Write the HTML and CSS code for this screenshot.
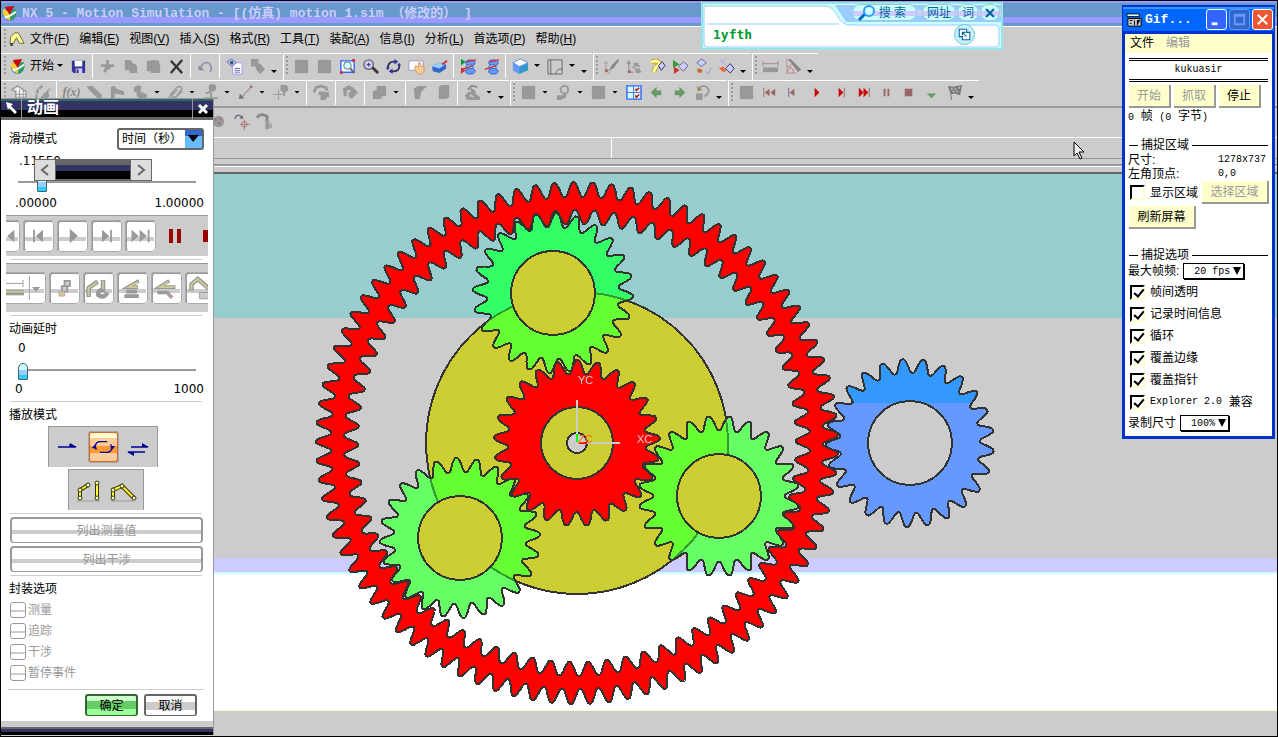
FILE: index.html
```html
<!DOCTYPE html>
<html lang="zh-CN">
<head>
    <meta charset="UTF-8">
    <meta name="viewport" content="width=device-width, initial-scale=1.0">
    <title>NX 5 - Motion Simulation</title>
    <link rel="stylesheet" href="styles.css">
</head>
<body>
    <svg class="symbols" aria-hidden="true">
        <symbol id="nx" viewBox="0 0 18 18"><circle cx="9" cy="10" r="7" fill="#39c"/><path d="M3 4Q0 9 5 14L10 17 9 8Z" fill="#fc3"/><path d="M9 8L15 4Q19 10 13 15L10 17Z" fill="#396"/><path d="M4 13Q10 12 16 7" stroke="#fff" stroke-width="2" fill="none"/><path d="M4 2L14 1 9 10Z" fill="#c00"/></symbol>
        <symbol id="save" viewBox="0 0 18 18"><path d="M2 3H16V16H4L2 14Z" fill="#339"/><path d="M5 3H13V9H5Z" fill="#fff"/><path d="M6 11H13V16H6Z" fill="#ccf"/><path d="M7 12H9V16H7Z" fill="#336"/></symbol>
        <symbol id="cut" viewBox="0 0 18 18"><path d="M9 2V7M2 8H16M9 7L6 15M12 8L9 12" stroke="#999" stroke-width="3" fill="none"/></symbol>
        <symbol id="copy" viewBox="0 0 18 18"><path d="M3 2H9L12 6H14L16 9V16H8V13H3Z" fill="#999"/></symbol>
        <symbol id="paste" viewBox="0 0 18 18"><path d="M2 3H6V2H12V3H15V6H16V16H6V14H2Z" fill="#999"/></symbol>
        <symbol id="del" viewBox="0 0 18 18"><path d="M3 3L15 16M15 2L3 16" stroke="#333" stroke-width="2.4" fill="none"/></symbol>
        <symbol id="undo" viewBox="0 0 18 18"><path d="M4 12Q5 4 11 5Q17 7 14 15" stroke="#99a" stroke-width="2" fill="none"/><path d="M1 8L8 13H2Z" fill="#889"/></symbol>
        <symbol id="find" viewBox="0 0 18 18"><path d="M7 5H17V17H7Z" fill="#fff" stroke="#99f"/><path d="M9 11H15M9 13H15M9 15H15" stroke="#669"/><path d="M1 4L6 1 11 5 6 9Z" fill="#ccf" stroke="#66c"/><circle cx="6" cy="5" r="2" fill="#366"/></symbol>
        <symbol id="shapes" viewBox="0 0 18 18"><path d="M2 1H10V6H12L17 12 12 17 7 12V9H2Z" fill="#999"/></symbol>
        <symbol id="square" viewBox="0 0 18 18"><path d="M2 2H16V16H2Z" fill="#999"/></symbol>
        <symbol id="fit" viewBox="0 0 18 18"><path d="M2 3H16V15H2Z" fill="#fff" stroke="#36f" stroke-width="1.5"/><circle cx="9" cy="8" r="4" fill="#cff" stroke="#666"/><path d="M12 11L16 16" stroke="#666" stroke-width="2"/><path d="M1 14H4V17H1ZM14 1H17V4H14Z" fill="#c33"/></symbol>
        <symbol id="zoomer" viewBox="0 0 18 18"><circle cx="7" cy="7" r="5" fill="#cce" stroke="#667" stroke-width="1.5"/><path d="M5 7H9M7 5V9" stroke="#339"/><path d="M11 10L17 16" stroke="#433" stroke-width="3"/></symbol>
        <symbol id="rotate" viewBox="0 0 18 18"><path d="M3 11Q3 3 11 4M15 7Q16 15 7 14" stroke="#336" stroke-width="2" fill="none"/><path d="M10 1L14 4 10 7ZM8 11L4 14 8 17ZM1 10H5L3 13ZM13 8H17L15 5Z" fill="#339"/></symbol>
        <symbol id="pan" viewBox="0 0 18 18"><path d="M1 3H16V13H1Z" fill="#fff" stroke="#99c"/><path d="M8 8L11 10 11 5H13L14 9H17V14L14 17H11L7 12Z" fill="#fc9" stroke="#c96"/></symbol>
        <symbol id="part" viewBox="0 0 18 18"><path d="M1 9L8 5 16 7V11L9 16 2 14Z" fill="#36c"/><path d="M1 9L8 5 15 7 9 11Z" fill="#9cf"/><path d="M12 7L17 3" stroke="#c33" stroke-width="2"/></symbol>
        <symbol id="sim" viewBox="0 0 18 18"><ellipse cx="11" cy="5" rx="5" ry="3" fill="#69f" stroke="#36c"/><ellipse cx="10" cy="10" rx="4" ry="3" fill="#9cf" stroke="#36c"/><ellipse cx="11" cy="14" rx="5" ry="3" fill="#69f" stroke="#36c"/><path d="M7 4L17 2M2 12L14 8" stroke="#c33" stroke-width="1.5"/></symbol>
        <symbol id="solve" viewBox="0 0 18 18"><use href="#sim"/><path d="M1 1L6 4 1 8Z" fill="#093"/><path d="M1 10L6 13 1 17Z" fill="#c33"/></symbol>
        <symbol id="cube" viewBox="0 0 18 18"><path d="M1 5L9 1 17 5V13L8 17 1 13Z" fill="#39c"/><path d="M1 5L9 1 17 5 8 9Z" fill="#fff" stroke="#69c"/><path d="M1 5L8 9V17L1 13Z" fill="#69f"/></symbol>
        <symbol id="sheet" viewBox="0 0 18 18"><path d="M1 2H16V17H1ZM4 2V17M9 17Q11 10 16 12" fill="none" stroke="#666"/></symbol>
        <symbol id="axis" viewBox="0 0 18 18"><path d="M3 4V13H9M3 13L8 17M3 4L1 6M3 4L5 6" stroke="#999" fill="none"/><path d="M6 13L10 7 16 1 17 3 11 11Z" fill="#888"/><path d="M2 12H5V15H2Z" fill="#a66"/></symbol>
        <symbol id="axis2" viewBox="0 0 18 18"><path d="M3 2V15H8M3 4L1 6M3 4L5 6M8 6L15 9M6 9L16 15" stroke="#999" stroke-width="1.5" fill="none"/><path d="M8 5H13V9H8ZM10 11H15V16H10Z" fill="#999"/><path d="M2 13H5V16H2Z" fill="#a66"/></symbol>
        <symbol id="chain" viewBox="0 0 18 18"><path d="M2 4L8 3 12 6 7 10 5 15" stroke="#c93" stroke-width="5" fill="none"/><path d="M2 4L8 3 12 6 7 10 5 15" stroke="#ff9" stroke-width="3" fill="none"/><path d="M10 8L14 4 17 8 13 13Z" fill="#ccf" stroke="#336"/></symbol>
        <symbol id="run" viewBox="0 0 18 18"><path d="M1 2L8 7 1 10Z" fill="#393"/><path d="M2 9L8 13 2 17Z" fill="#c33"/><path d="M7 9L12 4 17 8 12 14Z" fill="#ccf" stroke="#669"/></symbol>
        <symbol id="link" viewBox="0 0 18 18"><path d="M2 5L7 1 12 5 7 9Z" fill="#ccf" stroke="#669"/><path d="M11 14L14 17 17 10" stroke="#99c" fill="none"/><path d="M2 12L5 11 8 13 7 16 3 15Z" fill="#c63"/></symbol>
        <symbol id="link2" viewBox="0 0 18 18"><path d="M8 11L13 6 17 11 13 16Z" fill="#ccf" stroke="#336"/><path d="M2 2L9 8M7 1L4 6" stroke="#99f" stroke-dasharray="2 1"/><path d="M1 11L5 9 9 13 6 15Z" fill="#e63"/></symbol>
        <symbol id="measure" viewBox="0 0 18 18"><path d="M1 10H17V15H1Z" fill="#999"/><path d="M1 3V9M17 3V9M1 6H17" stroke="#a88" fill="none"/></symbol>
        <symbol id="angle" viewBox="0 0 18 18"><path d="M2 1V16H12M2 9Q9 9 9 16M2 16L7 6" stroke="#b88" fill="none"/><path d="M3 1H6L17 12 14 15Z" fill="#888"/></symbol>
        <symbol id="grid" viewBox="0 0 18 18"><path d="M1 6L7 2 16 8V16H5V8Z" fill="#eee" stroke="#999" stroke-width="1.5"/><path d="M5 11H16M5 14H16M9 6V16M13 6V16" stroke="#999"/></symbol>
        <symbol id="arm" viewBox="0 0 18 18"><path d="M2 16L4 6 9 2M8 15L12 11 17 5" stroke="#999" stroke-width="2.5" stroke-dasharray="5 1" fill="none"/><circle cx="13" cy="12" r="3" fill="#999"/></symbol>
        <symbol id="bar" viewBox="0 0 18 18"><path d="M1 2H7L17 12V16H13L2 5Z" fill="#999"/></symbol>
        <symbol id="slide" viewBox="0 0 18 18"><path d="M2 3L6 2 8 5 16 8V12L6 10V16H2Z" fill="#999"/></symbol>
        <symbol id="blob" viewBox="0 0 18 18"><path d="M2 4Q6 -1 10 3L9 8 16 11V14L11 17 5 13V9L2 8Z" fill="#999"/></symbol>
        <symbol id="clip" viewBox="0 0 18 18"><path d="M3 12L10 4Q15 1 16 5L10 13Q6 16 5 12L11 6M2 15L6 9M8 15L16 8" stroke="#999" stroke-width="1.5" fill="none"/></symbol>
        <symbol id="pin" viewBox="0 0 18 18"><path d="M10 5L9 8 4 10M9 8L10 15M2 15H17" stroke="#999" stroke-width="2" fill="none"/><circle cx="11" cy="4" r="4" fill="#999"/></symbol>
        <symbol id="arrow" viewBox="0 0 18 18"><path d="M15 3L5 14" stroke="#777"/><path d="M2 16L3 10 8 15Z" fill="#777"/><circle cx="15" cy="3" r="1.5" fill="#a66"/></symbol>
        <symbol id="mark" viewBox="0 0 18 18"><path d="M1 11H13M7 6V17" stroke="#999"/><path d="M9 1H15L17 3V7L14 9V13H12V9L9 7Z" fill="#999"/></symbol>
        <symbol id="hook" viewBox="0 0 18 18"><path d="M1 9L3 4 8 2 14 4 15 7" stroke="#999" stroke-width="3" fill="none"/><path d="M6 8H10L17 9V14H14V17H8V12H6Z" fill="#999"/></symbol>
        <symbol id="roll" viewBox="0 0 18 18"><path d="M1 5L7 1 12 4 17 9 10 16 7 13H2Z" fill="#999"/><path d="M6 13V8L9 7" stroke="#ccc" stroke-width="2" fill="none"/></symbol>
        <symbol id="union" viewBox="0 0 18 18"><path d="M6 2H16V13H11V16H2V7H6Z" fill="#999"/></symbol>
        <symbol id="slab" viewBox="0 0 18 18"><path d="M2 5L6 2H16L10 8 8 16H3Z" fill="#999"/></symbol>
        <symbol id="plate" viewBox="0 0 18 18"><path d="M4 3L7 1H15V14L12 16H4Z" fill="#999"/></symbol>
        <symbol id="joint" viewBox="0 0 18 18"><path d="M4 6L8 2 14 3M7 5L12 9" stroke="#888" stroke-width="2" fill="none"/><path d="M1 12L5 8H10L17 14V17H3Z" fill="#999"/><path d="M5 13L8 11 11 14Z" fill="#ccc"/></symbol>
        <symbol id="lamp" viewBox="0 0 18 18"><circle cx="10" cy="6" r="4" fill="none" stroke="#999" stroke-width="2"/><path d="M2 12H8L12 9V14L6 17H2Z" fill="#999"/></symbol>
        <symbol id="checks" viewBox="0 0 18 18"><path d="M2 2H17V16H2Z" fill="#cff" stroke="#36f" stroke-width="1.5"/><path d="M9 2V16M2 9H17" stroke="#66c"/><path d="M11 5L12 7 15 4M11 12L12 14 15 11" stroke="#c00" stroke-width="1.5" fill="none"/></symbol>
        <symbol id="left" viewBox="0 0 18 18"><path d="M3 9L9 3V7H14V12H9V15Z" fill="#696"/></symbol>
        <symbol id="right" viewBox="0 0 18 18"><path d="M15 9L9 3V7H4V12H9V15Z" fill="#696"/></symbol>
        <symbol id="turn" viewBox="0 0 18 18"><path d="M5 5Q10 -1 15 5Q17 10 11 13" stroke="#999" stroke-width="2" fill="none"/><path d="M2 10H9V17H2Z" fill="#999"/><path d="M3 2L4 8 9 6Z" fill="#986"/></symbol>
        <symbol id="first" viewBox="0 0 18 18"><path d="M9 5V13L4 9ZM15 5V13L10 9Z" fill="#966"/><path d="M3 4V14" stroke="#966"/></symbol>
        <symbol id="prev" viewBox="0 0 18 18"><path d="M11 5V13L6 9Z" fill="#966"/><path d="M5 4V14" stroke="#669"/></symbol>
        <symbol id="play" viewBox="0 0 18 18"><path d="M6 4V14L11 9Z" fill="#c00"/></symbol>
        <symbol id="next" viewBox="0 0 18 18"><path d="M6 4V14L11 9Z" fill="#c00"/><path d="M12 4V14" stroke="#966"/></symbol>
        <symbol id="last" viewBox="0 0 18 18"><path d="M3 4V14L8 9ZM8 4V14L13 9Z" fill="#c00"/><path d="M14 4V14" stroke="#966"/></symbol>
        <symbol id="pause" viewBox="0 0 18 18"><path d="M6 5H8V13H6ZM10 5H12V13H10Z" fill="#966"/></symbol>
        <symbol id="stop" viewBox="0 0 18 18"><path d="M5 5H13V13H5Z" fill="#966"/></symbol>
        <symbol id="down" viewBox="0 0 18 18"><path d="M4 10H14L9 15Z" fill="#696"/></symbol>
        <symbol id="flag" viewBox="0 0 18 18"><path d="M2 2L7 3 17 1 15 12 9 10 5 11Z" fill="#777"/><path d="M5 11L6 17" stroke="#777"/><path d="M5 4H7V6H5ZM9 4H11V6H9ZM13 3H15V5H13ZM7 7H9V9H7ZM11 7H13V9H11Z" fill="#bbb"/></symbol>
        <symbol id="ball" viewBox="0 0 18 18"><circle cx="9" cy="9" r="6" fill="#999"/><path d="M5 7H7M9 11H11M10 6H12" stroke="#a66" stroke-width="2"/></symbol>
        <symbol id="point" viewBox="0 0 18 18"><path d="M2 6Q4 0 9 4" stroke="#667" stroke-width="1.5" fill="none"/><path d="M7 6L11 6 10 2Z" fill="#667"/><circle cx="12" cy="12" r="3" fill="none" stroke="#a77"/><path d="M12 7V18M7 12H18" stroke="#a77"/></symbol>
        <symbol id="node" viewBox="0 0 18 18"><path d="M1 5Q5 -1 12 4L11 9" stroke="#888" stroke-width="3" fill="none"/><path d="M10 8H14V17H10Z" fill="#999"/><path d="M14 11H17V16H14Z" fill="#aaa"/></symbol>
    </svg>

    <div class="app">
        <header class="titlebar">
            <svg class="logo"><use href="#nx"/></svg>
            <h1>NX 5 - Motion Simulation - [(仿真) motion_1.sim （修改的） ]</h1>
        </header>

        <nav class="menubar">
            <span class="grip"></span>
            <svg class="part-icon" viewBox="0 0 18 18"><path d="M2 13L3 6 7 2H11L17 13H12L9 7 6 13Z" fill="#ff9" stroke="#663"/><path d="M2 13H5V16H3Z" fill="#333"/></svg>
            <a href="#">文件(<u>F</u>)</a>
            <a href="#">编辑(<u>E</u>)</a>
            <a href="#">视图(<u>V</u>)</a>
            <a href="#">插入(<u>S</u>)</a>
            <a href="#">格式(<u>R</u>)</a>
            <a href="#">工具(<u>T</u>)</a>
            <a href="#">装配(<u>A</u>)</a>
            <a href="#">信息(<u>I</u>)</a>
            <a href="#">分析(<u>L</u>)</a>
            <a href="#">首选项(<u>P</u>)</a>
            <a href="#">帮助(<u>H</u>)</a>
        </nav>

        <div class="toolbar">
            <div class="group">
                <span class="grip"></span>
                <button class="tool start"><svg><use href="#nx"/></svg>开始</button><i class="drop"></i>
                <button class="tool" aria-label="保存"><svg><use href="#save"/></svg></button>
                <span class="sep"></span>
                <button class="tool" aria-label="剪切"><svg><use href="#cut"/></svg></button>
                <button class="tool" aria-label="复制"><svg><use href="#copy"/></svg></button>
                <button class="tool" aria-label="粘贴"><svg><use href="#paste"/></svg></button>
                <button class="tool" aria-label="删除"><svg><use href="#del"/></svg></button>
                <span class="sep"></span>
                <button class="tool" aria-label="撤消"><svg><use href="#undo"/></svg></button>
                <span class="sep"></span>
                <button class="tool" aria-label="查找"><svg><use href="#find"/></svg></button>
                <button class="tool" aria-label="形状"><svg><use href="#shapes"/></svg></button><i class="drop low"></i>
            </div>
            <div class="group">
                <span class="grip"></span>
                <button class="tool" aria-label="视图一"><svg><use href="#square"/></svg></button>
                <button class="tool" aria-label="视图二"><svg><use href="#square"/></svg></button>
                <button class="tool" aria-label="适合窗口"><svg><use href="#fit"/></svg></button>
                <button class="tool" aria-label="缩放"><svg><use href="#zoomer"/></svg></button>
                <button class="tool" aria-label="旋转"><svg><use href="#rotate"/></svg></button>
                <button class="tool" aria-label="平移"><svg><use href="#pan"/></svg></button>
                <button class="tool" aria-label="透视"><svg><use href="#part"/></svg></button>
                <span class="sep"></span>
                <button class="tool" aria-label="求解"><svg><use href="#solve"/></svg></button>
                <button class="tool" aria-label="仿真"><svg><use href="#sim"/></svg></button>
                <span class="sep"></span>
                <button class="tool" aria-label="着色"><svg><use href="#cube"/></svg></button><i class="drop"></i>
                <button class="tool" aria-label="图纸"><svg><use href="#sheet"/></svg></button><i class="drop"></i><i class="drop low"></i>
            </div>
            <div class="group">
                <span class="grip"></span>
                <button class="tool" aria-label="坐标系"><svg><use href="#axis"/></svg></button>
                <button class="tool" aria-label="坐标轴"><svg><use href="#axis2"/></svg></button>
                <button class="tool" aria-label="连杆"><svg><use href="#chain"/></svg></button>
                <button class="tool" aria-label="运行"><svg><use href="#run"/></svg></button>
                <button class="tool" aria-label="连接"><svg><use href="#link"/></svg></button>
                <button class="tool" aria-label="断开"><svg><use href="#link2"/></svg></button><i class="drop low"></i>
            </div>
            <div class="group">
                <span class="grip"></span>
                <button class="tool" aria-label="测量距离"><svg><use href="#measure"/></svg></button>
                <button class="tool" aria-label="测量角度"><svg><use href="#angle"/></svg></button><i class="drop low"></i>
            </div>
        </div>

        <div class="toolbar second">
            <div class="group">
                <span class="grip"></span>
                <button class="tool" aria-label="环境"><svg><use href="#grid"/></svg></button>
                <button class="tool" aria-label="机构"><svg><use href="#arm"/></svg></button>
                <span class="sep"></span>
                <button class="tool fx" aria-label="函数">f(x)</button>
                <button class="tool" aria-label="连杆体"><svg><use href="#bar"/></svg></button>
                <button class="tool" aria-label="滑块"><svg><use href="#slide"/></svg></button>
                <button class="tool" aria-label="运动副"><svg><use href="#blob"/></svg></button><i class="drop"></i>
                <button class="tool" aria-label="弹簧"><svg><use href="#clip"/></svg></button><i class="drop"></i>
                <button class="tool" aria-label="约束"><svg><use href="#pin"/></svg></button><i class="drop"></i>
                <button class="tool" aria-label="力"><svg><use href="#arrow"/></svg></button><i class="drop"></i>
                <button class="tool" aria-label="标记"><svg><use href="#mark"/></svg></button><i class="drop"></i>
                <span class="sep"></span>
                <button class="tool" aria-label="驱动"><svg><use href="#hook"/></svg></button>
                <span class="sep"></span>
                <button class="tool" aria-label="滚动"><svg><use href="#roll"/></svg></button>
                <span class="sep"></span>
                <button class="tool" aria-label="合并"><svg><use href="#union"/></svg></button><i class="drop"></i>
                <span class="sep"></span>
                <button class="tool" aria-label="面"><svg><use href="#slab"/></svg></button>
                <button class="tool" aria-label="板"><svg><use href="#plate"/></svg></button>
                <span class="sep"></span>
                <button class="tool" aria-label="关节"><svg><use href="#joint"/></svg></button><i class="drop"></i><i class="drop low"></i>
            </div>
            <div class="group">
                <span class="grip"></span>
                <button class="tool" aria-label="结果"><svg><use href="#square"/></svg></button><i class="drop"></i>
                <button class="tool" aria-label="光源"><svg><use href="#lamp"/></svg></button><i class="drop"></i>
                <button class="tool" aria-label="显示"><svg><use href="#square"/></svg></button><i class="drop"></i>
                <button class="tool" aria-label="布局"><svg><use href="#checks"/></svg></button>
                <button class="tool" aria-label="上一个"><svg><use href="#left"/></svg></button>
                <button class="tool" aria-label="下一个"><svg><use href="#right"/></svg></button>
                <button class="tool" aria-label="返回"><svg><use href="#turn"/></svg></button><i class="drop low"></i>
            </div>
            <div class="group">
                <span class="grip"></span>
                <button class="tool" aria-label="动画"><svg><use href="#square"/></svg></button>
                <button class="tool" aria-label="首帧"><svg><use href="#first"/></svg></button>
                <button class="tool" aria-label="前一帧"><svg><use href="#prev"/></svg></button>
                <button class="tool wide" aria-label="播放"><svg><use href="#play"/></svg></button>
                <button class="tool" aria-label="后一帧"><svg><use href="#next"/></svg></button>
                <button class="tool narrow" aria-label="末帧"><svg><use href="#last"/></svg></button>
                <button class="tool narrow" aria-label="暂停"><svg><use href="#pause"/></svg></button>
                <button class="tool" aria-label="停止"><svg><use href="#stop"/></svg></button>
                <button class="tool" aria-label="向下"><svg><use href="#down"/></svg></button>
                <button class="tool" aria-label="完成"><svg><use href="#flag"/></svg></button><i class="drop low"></i>
            </div>
        </div>

        <div class="toolbar lower">
            <button class="tool" aria-label="球"><svg><use href="#ball"/></svg></button>
            <button class="tool" aria-label="点"><svg><use href="#point"/></svg></button>
            <button class="tool" aria-label="节点"><svg><use href="#node"/></svg></button>
        </div>
        <div class="prompt"><span></span><span></span></div>
        <div class="edge"></div>

        <main class="workspace">
            <svg class="canvas" aria-label="行星齿轮机构">
                <defs>
                    <clipPath id="on-carrier"><circle cx="576" cy="269" r="151"/></clipPath>
                    <clipPath id="on-planets"><use href="#planet-top"/><use href="#planet-right"/><use href="#planet-left"/></clipPath>
                    <linearGradient id="blue" gradientUnits="userSpaceOnUse" x1="0" y1="0" x2="0" y2="458">
                        <stop offset=".5" stop-color="#39f"/><stop offset=".5" stop-color="#69f"/>
                    </linearGradient>
                    <path id="planet-top" data-gear="552,119,80,66,24,2.5"/>
                    <path id="planet-right" data-gear="718,322,80,66,24,7.5"/>
                    <path id="planet-left" data-gear="459,364,80,66,24,-2.6"/>
                </defs>
                <circle class="carrier" cx="576" cy="269" r="151"/>
                <path class="sun" fill-rule="evenodd" data-gear="576,269,261,246,85,180.3" data-inner="219,233,74,179.5"/>
                <path class="line" fill="url(#blue)" data-gear="909,269,84,70,25,5.7"/>
                <circle class="hole" cx="909" cy="269" r="42"/>
                <use class="planet upper" href="#planet-top"/>
                <use class="planet" href="#planet-right"/>
                <use class="planet" href="#planet-left"/>
                <g clip-path="url(#on-carrier)" fill="#6f3">
                    <use href="#planet-top"/><use href="#planet-right"/><use href="#planet-left"/>
                </g>
                <circle class="hidden-edge" clip-path="url(#on-planets)" cx="576" cy="269" r="151"/>
                <g class="outline">
                    <use href="#planet-top"/><use href="#planet-right"/><use href="#planet-left"/>
                </g>
                <circle class="carrier" cx="552" cy="119" r="42"/>
                <circle class="carrier" cx="718" cy="322" r="42"/>
                <circle class="carrier" cx="459" cy="364" r="42"/>
                <path class="sun" data-gear="576,269,83,69,25,97.5"/>
                <circle class="carrier" cx="576" cy="269" r="36"/>
                <circle class="hole" cx="576" cy="269" r="10"/>
                <path d="M576 226V269H619" stroke="#ccc" stroke-width="2" fill="none"/>
                <path d="M576 260V268" stroke="#0f0" stroke-width="2"/>
                <path d="M578 269H586" stroke="#f00" stroke-width="2"/>
                <text class="axis" x="577" y="210">YC</text>
                <text class="axis" x="636" y="269">XC</text>
                <text class="axis z" x="577" y="269">ZC</text>
            </svg>
        </main>
        <footer class="status"></footer>
    </div>

    <section class="search">
        <svg class="search-shape" viewBox="0 0 302 48" preserveAspectRatio="none">
            <path d="M0 0H302V48H0Z" fill="#cff"/>
            <path d="M134 3H300V20H145Z" fill="#9cf"/>
            <path d="M150 8H300V14H152Z" fill="#ccf"/>
            <path d="M3 4H124Q131 4 136 13Q141 23 149 23H294Q298 23 298 27V42Q298 45 294 45H6Q3 45 3 42Z" fill="#fff" stroke="#9cf"/>
            <path d="M6 22H138" stroke="#9cf"/>
            <path d="M1 1H301V47H1Z" fill="none" stroke="#6cc"/>
        </svg>
        <div class="search-top">
            <button class="pill find"><svg viewBox="0 0 18 18"><path d="M2 16L8 10" stroke="#06c" stroke-width="3"/><circle cx="12" cy="7" r="5" fill="#cff" stroke="#39f" stroke-width="2"/></svg>搜 索</button>
            <button class="pill">网址</button>
            <button class="pill">词</button>
            <button class="pill" aria-label="关闭"><svg class="x" viewBox="0 0 10 10"><path d="M1 1L9 9M9 1L1 9" stroke="#069" stroke-width="2"/></svg></button>
        </div>
        <div class="search-bottom">
            <input type="text" value="1yfth" aria-label="输入">
            <button class="round" aria-label="展开"><svg viewBox="0 0 18 18"><path d="M4 4H11V7H14V14H7V11H4Z" fill="#fff" stroke="#069"/><path d="M7 7L11 11M7 10V7H10" stroke="#069" fill="none"/></svg></button>
        </div>
    </section>

    <section class="dialog">
        <header class="dialog-title">
            <svg viewBox="0 0 20 20"><path d="M5 4L12 6 10 8 16 14 14 16 8 10 7 12Z" fill="#fff"/></svg>
            <h2>动画</h2>
            <button aria-label="关闭"><svg viewBox="0 0 20 20"><path d="M6 6L14 14M14 6L6 14" stroke="#fff" stroke-width="3"/></svg></button>
        </header>
        <div class="dialog-body">
            <div class="mode">
                <label for="mode">滑动模式</label>
                <select id="mode"><option>时间（秒）</option></select>
            </div>
            <div class="value">.11550</div>
            <div class="floater">
                <button aria-label="左"><svg viewBox="0 0 20 20"><path d="M13 5L7 10 13 15" stroke="#666" stroke-width="2" fill="none"/></svg></button>
                <span></span>
                <button aria-label="右"><svg viewBox="0 0 20 20"><path d="M7 5L13 10 7 15" stroke="#666" stroke-width="2" fill="none"/></svg></button>
            </div>
            <input class="slider" type="range" min="0" max="1" step="0.0001" value="0.1155" aria-label="时间">
            <div class="range"><span>.00000</span><span>1.00000</span></div>

            <div class="strip player">
                <button class="key" aria-label="首"><svg viewBox="0 0 30 30"><path d="M26 8V22L18 15Z" fill="#999"/></svg></button>
                <button class="key" aria-label="上一步"><svg viewBox="0 0 30 30"><path d="M20 8V22L12 15Z" fill="#999"/><path d="M10 8V22" stroke="#999" stroke-width="2"/></svg></button>
                <button class="key" aria-label="播放"><svg viewBox="0 0 30 30"><path d="M12 7V23L21 15Z" fill="#999"/></svg></button>
                <button class="key" aria-label="下一步"><svg viewBox="0 0 30 30"><path d="M10 8V22L18 15Z" fill="#999"/><path d="M20 8V22" stroke="#999" stroke-width="2"/></svg></button>
                <button class="key" aria-label="末"><svg viewBox="0 0 30 30"><path d="M5 8V22L13 15ZM14 8V22L22 15Z" fill="#999"/><path d="M24 8V22" stroke="#999" stroke-width="2"/></svg></button>
                <button class="flat" aria-label="暂停"><svg viewBox="0 0 30 30"><path d="M10 8H14V22H10ZM18 8H22V22H18Z" fill="#900"/></svg></button>
                <button class="flat" aria-label="停止"><svg viewBox="0 0 30 30"><path d="M10 9H22V21H10Z" fill="#900"/></svg></button>
            </div>
            <hr>
            <div class="strip tools">
                <button class="key split" aria-label="测量"><svg viewBox="0 0 46 30"><path d="M0 17H24V23H0Z" fill="#999"/><path d="M0 19H24" stroke="#cc9" stroke-width="2"/><path d="M1 10H23M23 6V14M30 2V28" stroke="#999" fill="none"/><path d="M33 14H42L37 19Z" fill="#999"/></svg></button>
                <button class="key" aria-label="追踪"><svg viewBox="0 0 30 30"><path d="M15 7H21V13H15ZM12 13H18V19H12Z" fill="#ccc" stroke="#999" stroke-width="2"/><path d="M9 19H15V24H9Z" fill="#cc9" stroke="#c99"/></svg></button>
                <button class="key" aria-label="干涉"><svg viewBox="0 0 30 30"><path d="M4 25V15L14 8M20 6V17Q13 18 15 23Q21 27 25 20" stroke="#999" stroke-width="5" fill="none"/><path d="M4 24V15L13 9M20 7V16" stroke="#cc9" stroke-width="2" fill="none"/></svg></button>
                <button class="key" aria-label="机构一"><svg viewBox="0 0 30 30"><path d="M22 7L10 14H21M8 19H20M6 24H22" stroke="#999" stroke-width="4" fill="none"/><path d="M21 8L11 14H20" stroke="#cc9" stroke-width="2" fill="none"/></svg></button>
                <button class="key" aria-label="机构二"><svg viewBox="0 0 30 30"><path d="M18 7L7 14H25M5 20H16L21 26" stroke="#999" stroke-width="4" fill="none"/><path d="M17 8L8 14H24" stroke="#cc9" stroke-width="2" fill="none"/><path d="M16 20L21 26" stroke="#c99" stroke-width="2"/></svg></button>
                <button class="key" aria-label="机构三"><svg viewBox="0 0 30 30"><path d="M5 18V11L12 5 26 17" stroke="#999" stroke-width="5" fill="none"/><path d="M5 17V11L12 5 24 16" stroke="#cc9" stroke-width="2" fill="none"/><path d="M14 20H24V27H14Z" fill="#ccc" stroke="#999"/></svg></button>
            </div>
            <hr>
            <h3>动画延时</h3>
            <div class="value zero">0</div>
            <input class="slider delay" type="range" min="0" max="1000" value="0" aria-label="动画延时">
            <div class="range"><span>0</span><span>1000</span></div>
            <hr>
            <h3>播放模式</h3>
            <div class="box loop">
                <button class="flat" aria-label="一次"><svg viewBox="0 0 30 30"><path d="M5 15H23M17 12V15" stroke="#009" stroke-width="1.5" fill="none"/><path d="M17 11L24 15H17Z" fill="#009"/></svg></button>
                <button class="key on" aria-label="循环"><svg viewBox="0 0 30 30"><path d="M7 18Q4 11 10 9H19M23 12Q26 19 20 21H11" stroke="#009" stroke-width="1.5" fill="none"/><path d="M2 16L6 12 7 17ZM23 14H28L24 19Z" fill="#009"/></svg></button>
                <button class="flat" aria-label="往返"><svg viewBox="0 0 30 30"><path d="M8 15H25M5 20H22" stroke="#009" stroke-width="1.5" fill="none"/><path d="M19 11L26 15H19ZM4 20H11V24Z" fill="#009"/></svg></button>
            </div>
            <div class="box pose">
                <button class="flat" aria-label="装配位置"><svg viewBox="0 0 30 30"><path d="M6 23V15L14 10M23 23V8" stroke="#330" stroke-width="4" fill="none"/><path d="M6 23V15L14 10M23 23V8" stroke="#ff3" stroke-width="2" fill="none"/><path d="M3 26H26" stroke="#999"/><g fill="#ffc" stroke="#330"><circle cx="6" cy="23" r="2"/><circle cx="6" cy="15" r="2"/><circle cx="14" cy="10" r="2"/><circle cx="23" cy="23" r="2"/><circle cx="23" cy="8" r="2"/></g></svg></button>
                <button class="flat" aria-label="设计位置"><svg viewBox="0 0 30 30"><path d="M5 23V15L14 11 26 23" stroke="#330" stroke-width="4" fill="none"/><path d="M5 23V15L14 11 26 23" stroke="#ff3" stroke-width="2" fill="none"/><path d="M3 26H26" stroke="#999"/><g fill="#ffc" stroke="#330"><circle cx="5" cy="23" r="2"/><circle cx="5" cy="15" r="2"/><circle cx="14" cy="11" r="2"/><circle cx="26" cy="23" r="2"/></g></svg></button>
            </div>
            <hr>
            <button class="list" disabled>列出测量值</button>
            <button class="list" disabled>列出干涉</button>
            <hr>
            <h3>封装选项</h3>
            <label class="pack"><input type="checkbox" disabled>测量</label>
            <label class="pack"><input type="checkbox" disabled>追踪</label>
            <label class="pack"><input type="checkbox" disabled>干涉</label>
            <label class="pack"><input type="checkbox" disabled>暂停事件</label>
            <hr class="last">
            <div class="actions">
                <button class="ok">确定</button>
                <button>取消</button>
            </div>
        </div>
        <div class="dialog-foot"></div>
    </section>

    <section class="gif">
        <header class="gif-title">
            <svg viewBox="0 0 18 18"><path d="M1 3H14V6H1Z" fill="#cff" stroke="#000"/><path d="M2 8H16V16H2Z" fill="#ccc" stroke="#000"/><path d="M4 10H7M4 13H6M9 10V15M12 15V10H15" stroke="#000"/></svg>
            <h2>Gif...</h2>
            <button aria-label="最小化"><svg viewBox="0 0 20 20"><path d="M5 13H11V16H5Z" fill="#fff"/></svg></button>
            <button class="dim" aria-label="最大化"><svg viewBox="0 0 20 20"><path d="M5 5H15V15H5ZM5 6H15" fill="none" stroke="#69f" stroke-width="2"/></svg></button>
            <button class="close" aria-label="关闭"><svg viewBox="0 0 20 20"><path d="M5 5L15 15M15 5L5 15" stroke="#fff" stroke-width="2"/></svg></button>
        </header>
        <nav class="gif-menu"><a href="#">文件</a><a href="#" class="off">编辑</a></nav>
        <div class="gif-body">
            <div class="name latin">kukuasir</div>
            <div class="row keys">
                <button disabled>开始</button>
                <button disabled>抓取</button>
                <button>停止</button>
            </div>
            <p class="frames"><span class="latin">0</span>&nbsp; 帧 &nbsp;<span class="latin">(0</span>&nbsp; 字节<span class="latin">)</span></p>
            <h3>捕捉区域</h3>
            <dl>
                <dt>尺寸:</dt><dd class="latin">1278x737</dd>
                <dt>左角顶点:</dt><dd class="latin">0,0</dd>
            </dl>
            <div class="row area">
                <label><input type="checkbox">显示区域</label>
                <button disabled>选择区域</button>
            </div>
            <button class="refresh">刷新屏幕</button>
            <h3 class="options">捕捉选项</h3>
            <div class="row pick">
                <label for="fps">最大帧频:</label>
                <select id="fps"><option>20 fps</option></select>
            </div>
            <div class="checks">
                <label class="check"><input type="checkbox" checked>帧间透明</label>
                <label class="check"><input type="checkbox" checked>记录时间信息</label>
                <label class="check"><input type="checkbox" checked>循环</label>
                <label class="check"><input type="checkbox" checked>覆盖边缘</label>
                <label class="check"><input type="checkbox" checked>覆盖指针</label>
                <label class="check"><input type="checkbox" checked><span class="latin">Explorer 2.0</span>&nbsp;&nbsp;兼容</label>
            </div>
            <div class="row pick">
                <label for="size">录制尺寸</label>
                <select id="size" class="small"><option>100%</option></select>
            </div>
        </div>
    </section>

    <svg class="cursor" viewBox="0 0 12 20"><path d="M1 1V15L4 12 7 18 9 17 6 11H11Z" fill="#eee" stroke="#000"/></svg>

    <script src="gears.js"></script>
</body>
</html>
```
FILE: styles.css
```css
* {
    box-sizing: border-box;
}

body {
    margin: 0;
    font: 12px/16px "Liberation Sans", "Noto Sans CJK SC", sans-serif;
    color: #000;
    overflow: hidden;
}

button, input, select {
    font: inherit;
    color: inherit;
    margin: 0;
    padding: 0;
}

button {
    border: 0;
    background: none;
}

h1, h2, h3, p, dl, dd {
    margin: 0;
    font-size: 12px;
    font-weight: normal;
}

a {
    color: inherit;
    text-decoration: none;
}

svg {
    display: block;
    flex: none;
}

.symbols {
    position: absolute;
    width: 0;
    height: 0;
}

/* main window */
.app {
    display: flex;
    flex-direction: column;
    height: 100vh;
    background: #ccc;
    border: 1px solid #000;
}

.titlebar {
    display: flex;
    align-items: center;
    gap: 4px;
    height: 25px;
    flex: none;
    background: linear-gradient(#99f 0 2px, #69c 2px 16px, #99f 16px 22px, #69c 22px);
    color: #ccf;
}

.titlebar h1 {
    font: bold 13px/24px "Liberation Mono", "Noto Sans CJK SC", monospace;
    white-space: pre;
}

.logo {
    width: 17px;
    height: 17px;
}

.menubar {
    display: flex;
    align-items: center;
    gap: 10px;
    height: 27px;
    flex: none;
    padding-left: 2px;
    padding-bottom: 2px;
    border-top: 1px solid #fff;
}

.menubar .part-icon {
    width: 17px;
    height: 17px;
    margin: 0 -5px 0 -10px;
}

.grip {
    flex: none;
    width: 5px;
    height: 20px;
    background: repeating-linear-gradient(#999 0 2px, #ccc 2px 4px) 1px 0 / 2px 100% no-repeat;
}

.toolbar {
    display: flex;
    height: 27px;
    flex: none;
}

.toolbar.second {
    height: 26px;
}

.toolbar .group {
    display: flex;
    align-items: center;
    padding: 0 1px 2px 2px;
    margin-right: 1px;
    border-top: 1px solid #fff;
}

.group + .group {
    border-left: 1px solid #fff;
    padding-left: 1px;
}

.tool {
    display: flex;
    align-items: center;
    justify-content: center;
    width: 23px;
    height: 24px;
    flex: none;
}

.tool svg {
    width: 17px;
    height: 17px;
}

.tool.start {
    width: 47px;
    gap: 4px;
}

.tool.wide {
    width: 26px;
}

.tool.narrow {
    width: 22px;
}

.tool.fx {
    font: italic bold 12px "Liberation Serif", serif;
    color: #888;
}

.drop {
    flex: none;
    width: 12px;
    height: 4px;
    background: #000;
    clip-path: polygon(2px 0, 8px 0, 5px 3px);
}

.drop.low {
    align-self: flex-end;
    margin-bottom: 4px;
}

.sep {
    flex: none;
    width: 1px;
    height: 24px;
    margin: 0 3px 0 2px;
    background: #fff;
}

.toolbar.lower {
    height: 31px;
    align-items: flex-start;
    padding-top: 1px;
    padding-left: 206px;
    border-top: 2px solid #999;
}

.prompt {
    display: flex;
    height: 22px;
    flex: none;
    border-top: 1px solid #fff;
    border-bottom: 1px solid #999;
}

.prompt span:first-child {
    width: 611px;
    border-right: 1px solid #fff;
}

.edge {
    height: 15px;
    flex: none;
    background: linear-gradient(#ccc 0 5px, #999 5px 7px, #fff 7px 8px, #ccc 8px 13px, #666 13px);
}

.workspace {
    flex: 1;
    min-height: 0;
    background: linear-gradient(#9cc 0 144px, #ccc 144px 384px, #ccf 384px 398px, #cff 398px 400px, #fff 400px);
    border-bottom: 1px solid #ffc;
}

.canvas {
    width: 100%;
    height: 100%;
    shape-rendering: crispEdges;
}

.sun, .line, .carrier, .hole, .outline {
    stroke: #333;
    stroke-width: 2px;
    stroke-linejoin: round;
}

.sun {
    fill: #f00;
}

.carrier {
    fill: #cc3;
}

.hole {
    fill: #ccc;
}

.planet {
    fill: #6f6;
}

.planet.upper {
    fill: #3f6;
}

.outline {
    fill: none;
}

.hidden-edge {
    fill: none;
    stroke: #393;
    stroke-width: 2px;
}

.axis {
    font-size: 11px;
    fill: #ccc;
}

.axis.z {
    fill: #f60;
}

.status {
    height: 25px;
    flex: none;
}

/* search box floating over the menu */
.search {
    position: absolute;
    left: 701px;
    top: 2px;
    width: 302px;
    height: 48px;
    color: #069;
    z-index: 1;
}

.search-shape {
    position: absolute;
    width: 100%;
    height: 100%;
    z-index: -1;
}

.search-top {
    display: flex;
    gap: 1px;
    padding: 2px 3px 0 0;
    justify-content: flex-end;
}

.pill {
    display: flex;
    align-items: center;
    height: 17px;
    padding: 0 4px;
    border: 1px solid #9cc;
    border-radius: 9px;
    background: linear-gradient(#cff 0 6px, #ccf 6px 11px, #cff 11px);
}

.pill.find {
    gap: 4px;
    padding: 0 10px 0 4px;
    margin-right: 4px;
}

.pill svg {
    width: 18px;
    height: 18px;
}

.pill .x {
    width: 10px;
    height: 10px;
}

.search-bottom {
    display: flex;
    justify-content: space-between;
    padding: 3px 28px 0 12px;
}

.search-bottom input {
    width: 120px;
    height: 20px;
    border: 0;
    background: none;
    color: #093;
    font: bold 13px "DejaVu Sans Mono", monospace;
}

.round {
    width: 21px;
    height: 21px;
    border: 1px solid #6cc;
    border-radius: 50%;
    background: #cef;
}

/* animation dialog */
.dialog {
    position: absolute;
    left: 1px;
    top: 98px;
    width: 213px;
    background: #fff;
    border-right: 1px solid #999;
}

.dialog-title {
    display: flex;
    height: 22px;
    background: linear-gradient(#999 0 1px, #366 1px 3px, #336 3px 12px, #000 12px 19px, #666 19px);
    color: #fff;
}

.dialog-title svg {
    width: 20px;
    height: 20px;
}

.dialog-title h2 {
    flex: 1;
    padding-left: 5px;
    font-size: 16px;
    line-height: 20px;
    font-weight: bold;
    border-left: 1px solid #999;
    border-right: 1px solid #999;
}

.dialog-body {
    position: relative;
    padding: 8px 9px 5px 8px;
}

.mode {
    display: flex;
    justify-content: space-between;
    align-items: center;
}

.mode select {
    appearance: none;
    width: 87px;
    height: 22px;
    padding-left: 3px;
    border: 2px solid #666;
    border-radius: 3px;
    background: #fff url("data:image/svg+xml,%3Csvg xmlns='http://www.w3.org/2000/svg' width='17' height='18'%3E%3Cpath d='M0 0H17V18H0Z' fill='%236bf'/%3E%3Cpath d='M0 0H17V6H0Z' fill='%2336c'/%3E%3Cpath d='M3 5H14L8 12Z'/%3E%3C/svg%3E") right center no-repeat;
}

.value {
    margin-top: 3px;
    padding-left: 10px;
    font: 12px/16px "DejaVu Sans", sans-serif;
}

.floater {
    position: absolute;
    left: 33px;
    top: 39px;
    display: flex;
    width: 118px;
    height: 22px;
    border: 1px solid #666;
    background: #ddd;
    z-index: 1;
}

.floater span {
    flex: 1;
    border: 1px solid #666;
    background: linear-gradient(#666 0 4px, #336 4px 10px, #000 10px 18px);
}

.floater svg {
    width: 20px;
    height: 20px;
}

.slider {
    appearance: none;
    display: block;
    width: 178px;
    height: 24px;
    margin: 2px 0 0 9px;
    background: linear-gradient(#999, #999) 0 10px / 100% 2px no-repeat;
}

.slider::-webkit-slider-thumb {
    appearance: none;
    width: 10px;
    height: 17px;
    border: 1px solid #366;
    border-radius: 5px 5px 1px 1px;
    background: linear-gradient(#cff 0 6px, #9cf 6px 11px, #3cf 11px);
}

.range {
    display: flex;
    justify-content: space-between;
    padding: 0 0 0 6px;
    font: 12px/17px "DejaVu Sans", sans-serif;
}

.strip {
    display: flex;
    gap: 3px;
    align-items: center;
    justify-content: flex-start;
    height: 41px;
    margin: 3px -4px 3px -3px;
    overflow: hidden;
    background: #ccc;
    border-top: 1px solid #999;
}

.player .key:first-child {
    margin-left: -17px;
}

.strip.tools {
    height: 49px;
    margin-bottom: 2px;
}

.key {
    flex: none;
    width: 31px;
    height: 32px;
    border: 2px solid #999;
    border-right-color: #fff;
    border-bottom-color: #fff;
    outline: 1px solid #aaa;
    outline-offset: -1px;
    border-radius: 4px;
    background: linear-gradient(#fff 0 15px, #ccc 15px 19px, #fff 19px);
}

.key svg {
    width: 27px;
    height: 28px;
}

.key.split {
    width: 46px;
    margin-left: -6px;
}

.key.split svg {
    width: 42px;
}

.flat {
    flex: none;
    width: 31px;
}

.flat svg {
    width: 30px;
    height: 30px;
}

hr {
    height: 1px;
    margin: 3px 2px 3px 1px;
    border: 0;
    background: #ccc;
}

.dialog h3 {
    line-height: 20px;
}

.value.zero {
    margin-top: 1px;
    padding-left: 9px;
}

.slider.delay {
    margin-top: 3px;
    margin-bottom: -2px;
}

.box {
    display: flex;
    justify-content: center;
    align-items: center;
    gap: 4px;
    width: 110px;
    height: 41px;
    margin: 1px auto 2px 39px;
    border: solid #999;
    border-width: 1px 1px 0;
    background: #ccc;
}

.box.pose {
    width: 76px;
    gap: 3px;
    margin-left: 59px;
    margin-bottom: 3px;
}

.key.on {
    background: linear-gradient(#ffc 0 5px, #fc9 5px 13px, #f93 13px 20px, #fc9 20px);
    border-color: #c63;
}

.list {
    display: block;
    width: 193px;
    height: 26px;
    margin-bottom: 3px;
    margin-left: 1px;
    border: 2px solid #999;
    border-bottom: 1px solid #999;
    border-radius: 4px;
    color: #999;
    background: linear-gradient(#fff 0 11px, #ccc 11px 15px, #fff 15px);
}

.pack {
    display: flex;
    align-items: center;
    gap: 2px;
    height: 21px;
    color: #999;
}

.pack input {
    appearance: none;
    width: 16px;
    height: 16px;
    margin-left: 1px;
    border: 1px solid #999;
    border-radius: 3px;
    background: linear-gradient(#fff 0 7px, #ccc 7px 9px, #fff 9px);
}

hr.last {
    margin: 6px 0 4px -1px;
}

.actions {
    display: flex;
    justify-content: flex-end;
    gap: 6px;
    padding-right: 7px;
}

.actions button {
    width: 53px;
    height: 22px;
    border: 2px solid #666;
    border-bottom-width: 1px;
    border-radius: 3px;
    background: linear-gradient(#fff 0 6px, #ccc 6px 14px, #fff 14px);
}

.actions .ok {
    border-color: #363;
    background: linear-gradient(#cfc 0 5px, #6c6 5px 13px, #9f9 13px);
}

.dialog-foot {
    height: 14px;
    background: linear-gradient(#ccc 0 6px, #666 6px 8px, #336 8px 11px, #000 11px);
}

/* gif recorder window */
.gif {
    position: absolute;
    left: 1122px;
    top: 5px;
    width: 153px;
    background: #fff;
    border: 3px solid #03c;
    border-top: 0;
    z-index: 2;
}

.gif-title {
    display: flex;
    align-items: center;
    gap: 2px;
    height: 29px;
    margin: 0 -2px;
    padding: 0 1px 0 3px;
    background: linear-gradient(#03c 0 2px, #39f 2px 4px, #06f 4px 26px, #03c 26px);
    color: #fff;
}

.gif-title > svg {
    width: 17px;
    height: 17px;
}

.gif-title h2 {
    flex: 1;
    font: bold 13px "Liberation Mono", monospace;
}

.gif-title button {
    width: 21px;
    height: 21px;
    border: 1px solid #fff;
    border-radius: 3px;
    background: #36f;
}

.gif-title button.dim {
    border-color: #69f;
    background: #36c;
}

.gif-title button.close {
    background: #e53;
}

.gif-title button svg {
    width: 19px;
    height: 19px;
}

.gif-menu {
    display: flex;
    gap: 12px;
    padding: 1px 5px 2px;
    background: #ffc;
}

.gif .off, .gif button:disabled {
    color: #999;
}

.gif-body {
    padding: 5px 3px 5px;
}

.latin {
    font-family: "Liberation Mono", monospace;
    font-size: 10px;
}

.name {
    margin: 0 1px;
    line-height: 18px;
    text-align: center;
    border: double #000;
    border-width: 3px 0;
}

.row {
    display: flex;
    align-items: center;
}

.keys {
    gap: 3px;
    padding: 3px 1px 0;
}

.gif-body button {
    width: 42px;
    height: 23px;
    background: #ffc;
    border: solid #999;
    border-width: 0 2px 2px 0;
}

.frames {
    margin-bottom: 11px;
}

.gif-body h3 {
    display: flex;
    align-items: center;
    gap: 3px;
    margin: 0 1px;
}

.gif-body h3::before, .gif-body h3::after {
    content: "";
    width: 9px;
    height: 1px;
    background: #000;
}

.gif-body h3::after {
    flex: 1;
}

.gif-body dl {
    display: grid;
    grid-template-columns: 90px 1fr;
    line-height: 14px;
}

.gif-body input {
    appearance: none;
    position: relative;
    width: 15px;
    height: 15px;
    flex: none;
    margin: 0 5px 0 2px;
    border: 2px solid #000;
    border-color: #000 #ffc #ffc #000;
}

.gif-body input:checked::after {
    content: "";
    position: absolute;
    left: 4px;
    top: 0;
    width: 4px;
    height: 8px;
    border: solid #000;
    border-width: 0 2px 2px 0;
    transform: rotate(40deg);
}

.area {
    justify-content: space-between;
}

.area label, .check {
    display: flex;
    align-items: center;
}

.checks {
    padding: 2px 0;
}

.check {
    height: 22px;
}

.area button {
    width: 67px;
}

.gif-body .refresh {
    display: block;
    width: 67px;
    margin: 2px 0 18px 1px;
}

.pick {
    gap: 4px;
}

.pick label {
    white-space: nowrap;
}

.pick select {
    appearance: none;
    width: 61px;
    height: 16px;
    padding-left: 10px;
    border: 1px solid #000;
    border-radius: 0;
    box-shadow: 1px 1px #000;
    font: 10px "Liberation Mono", monospace;
    background: #fff url("data:image/svg+xml,%3Csvg xmlns='http://www.w3.org/2000/svg' width='8' height='8'%3E%3Cpath d='M0 0H8L4 8Z'/%3E%3C/svg%3E") right 2px center no-repeat;
}

.pick select.small {
    width: 49px;
}

.cursor {
    position: absolute;
    left: 1073px;
    top: 141px;
    width: 12px;
    height: 20px;
}
```
FILE: gears.js
```js
// fraction of the pitch and height between root (0) and tip (1)
const tooth = [
    [-0.5, 0], [-0.42, 0.04], [-0.34, 0.2], [-0.24, 0.55], [-0.13, 0.88], [-0.07, 0.98],
    [0, 1],
    [0.07, 0.98], [0.13, 0.88], [0.24, 0.55], [0.34, 0.2], [0.42, 0.04]
];

function outline(cx, cy, tip, root, teeth, phase) {
    const points = [];
    for (let i = 0; i < teeth; i++) {
        for (const [t, h] of tooth) {
            const a = (phase + (i + t) * 360 / teeth) * Math.PI / 180;
            const r = root + (tip - root) * h;
            points.push((cx + r * Math.cos(a)).toFixed(1) + " " + (cy + r * Math.sin(a)).toFixed(1));
        }
    }
    return "M" + points.join("L") + "Z";
}

document.querySelectorAll("[data-gear]").forEach(function (path) {
    const [cx, cy, ...rest] = path.dataset.gear.split(",").map(Number);
    let d = outline(cx, cy, ...rest);
    if (path.dataset.inner) {
        d += outline(cx, cy, ...path.dataset.inner.split(",").map(Number));
    }
    path.setAttribute("d", d);
});
```
